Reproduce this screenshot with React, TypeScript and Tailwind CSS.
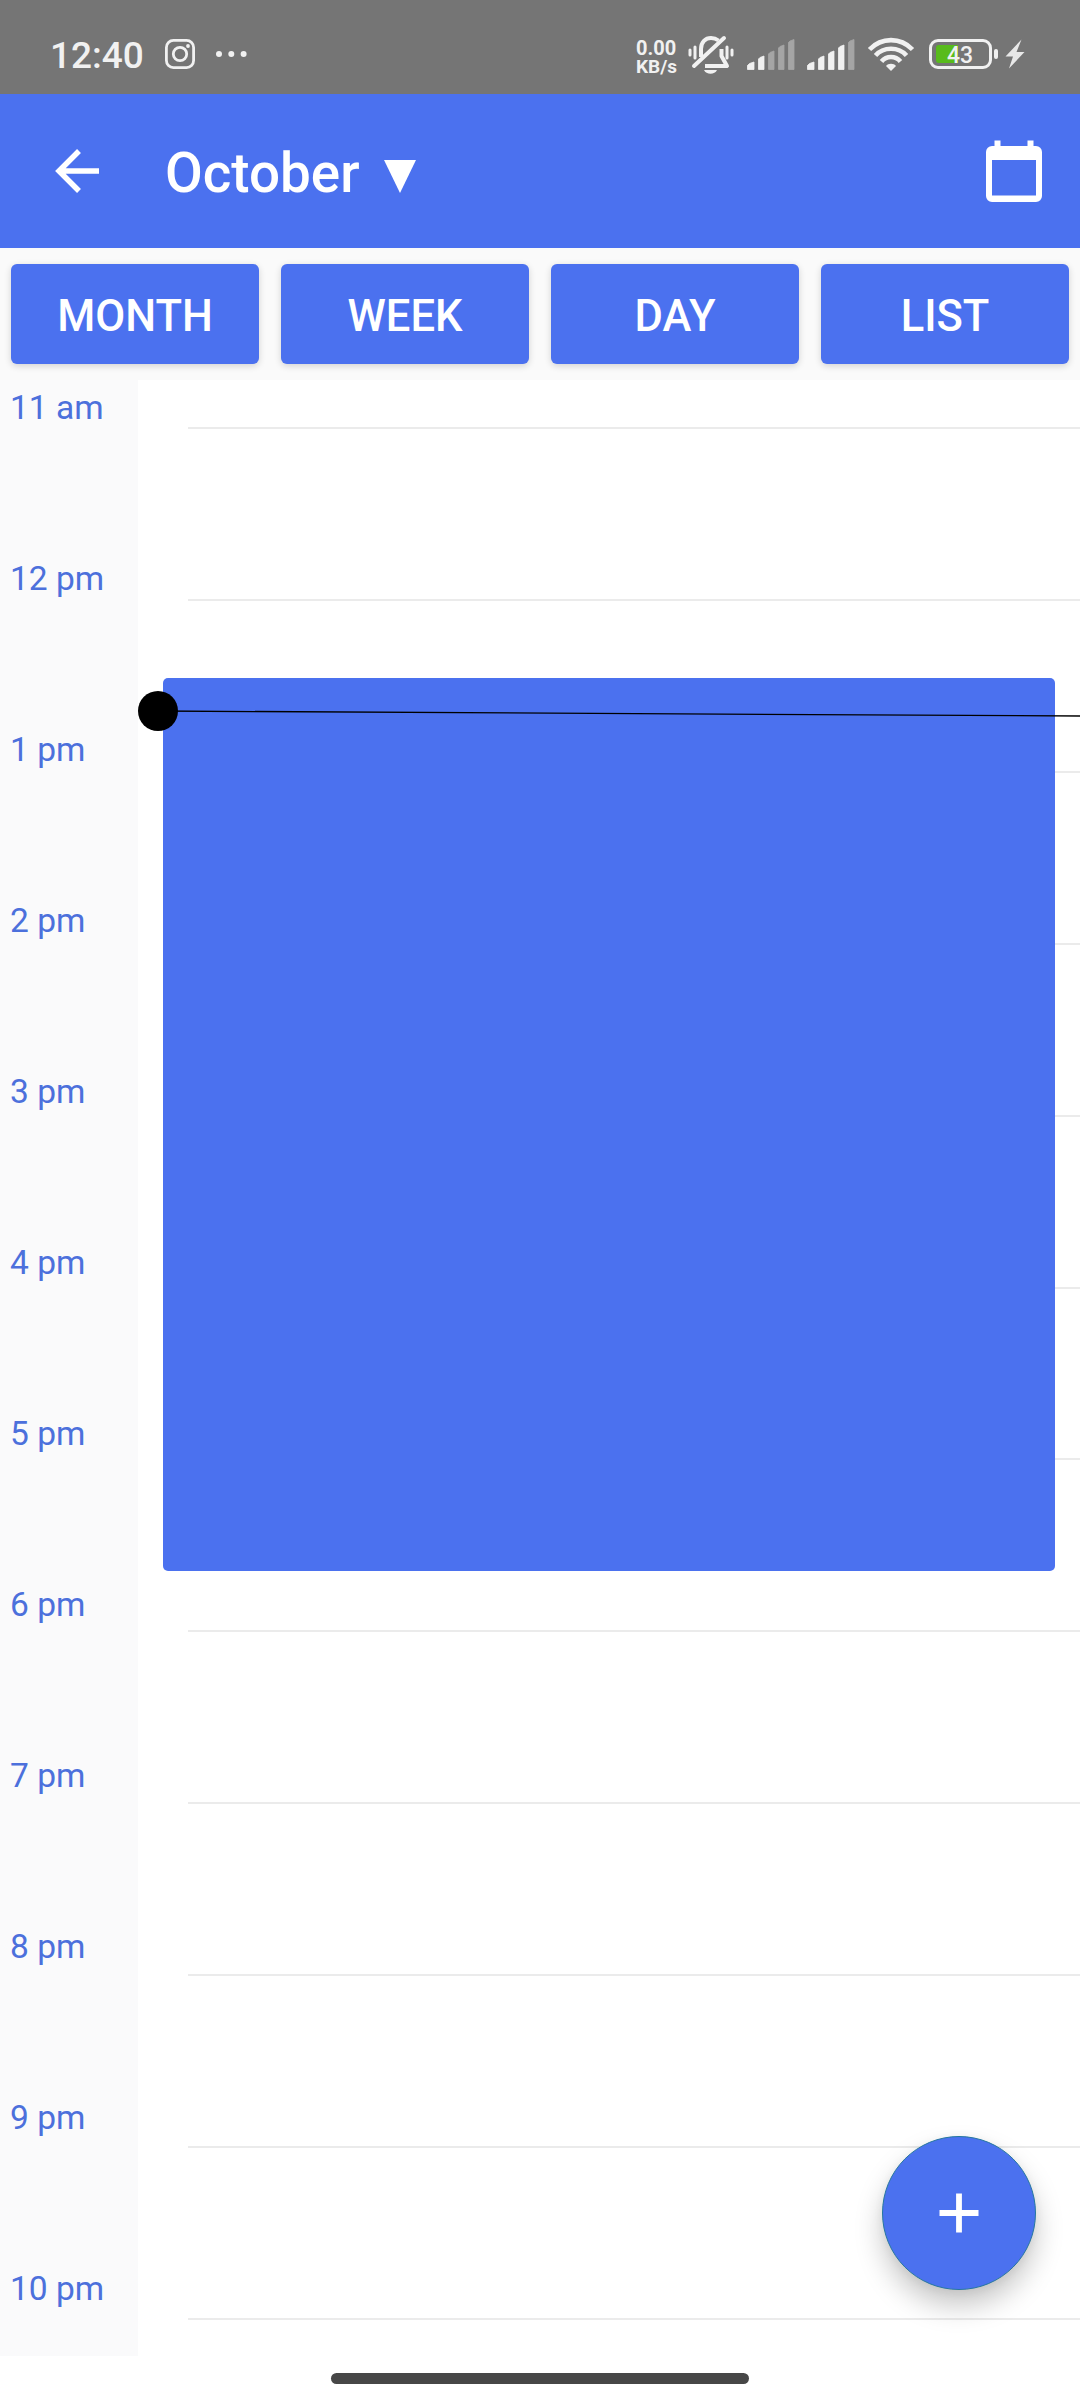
const HOURS = ['11 am', '12 pm', '1 pm', '2 pm', '3 pm', '4 pm', '5 pm', '6 pm', '7 pm', '8 pm', '9 pm', '10 pm'];
const TABS = ['MONTH', 'WEEK', 'DAY', 'LIST'];

function Signal({ level }: { level: number }) {
  const bars = [
    'M0.500 30.500V26.500L2.500 24.500L7 23V30.500Z',
    'M11.500 30.500V20L13 18.500L17 17V30.500Z',
    'M21.500 30.500V15L23 13.500L27 12V30.500Z',
    'M31.500 30.500V9L33 7.500L37 6V30.500Z',
    'M41.500 30.500V3.500L43 2L47 0.500V30.500Z',
  ];
  return (
    <svg className="h-8 w-12" viewBox="0 0 48 32">
      {bars.map((d, i) => (
        <path key={d} d={d} fill={i < level ? '#f1f1f1' : '#a5a5a5'} stroke={i < level ? '#f1f1f1' : '#a5a5a5'} strokeWidth="0.8" strokeLinejoin="round" />
      ))}
    </svg>
  );
}

function StatusBar() {
  return (
    <div className="flex h-[94px] shrink-0 items-start bg-[#757575] text-[#f1f1f1]">
      <div className="ml-[50px] mt-[34px] w-[115px] whitespace-nowrap text-[37px] leading-[43px] font-medium">12:40</div>
      <svg className="mt-[39px] h-[30px] w-[30px]" viewBox="0 0 30 30" fill="none" stroke="#f1f1f1">
        <rect x="1.400" y="1.400" width="27.200" height="27.200" rx="7" strokeWidth="2.800" />
        <circle cx="15" cy="15" r="6.700" strokeWidth="2.800" />
        <circle cx="23" cy="7" r="1.900" fill="#f1f1f1" stroke="none" />
      </svg>
      <svg className="ml-[20px] mt-[51px] h-[6px] w-[33px]" viewBox="0 0 33 6" fill="#f1f1f1">
        <circle cx="4" cy="3" r="3" />
        <circle cx="16.300" cy="3" r="3" />
        <circle cx="28.600" cy="3" r="3" />
      </svg>
      <div className="ml-auto mt-[39px] w-[52px] whitespace-nowrap text-[20px] leading-[18px] font-bold">
        <div>0.00</div>
        <div className="pt-px text-[19px]">KB/s</div>
      </div>
      <svg className="mt-[35px] h-[40px] w-[46px]" viewBox="0 0 46 40" fill="none" stroke="#f1f1f1">
        <path d="M2 15v5M7 12v11M39 12v11M44 15v5" strokeWidth="3" strokeLinecap="round" />
        <path d="M13 22V14C13 7 17.500 3 23 3C26 3 28.500 4 30.500 5.500" strokeWidth="4" />
        <path d="M33.500 14V21L39 31H17" strokeWidth="4" strokeLinejoin="round" />
        <path d="M6 31L36 3" strokeWidth="4" strokeLinecap="round" />
        <path d="M16 35H29C27 40 18 40 16 35Z" fill="#f1f1f1" stroke="none" />
      </svg>
      <div className="ml-[13px] mt-[39px]"><Signal level={2} /></div>
      <div className="ml-[12px] mt-[39px]"><Signal level={4} /></div>
      <svg className="ml-[12px] mt-[37px] h-[35px] w-[48px]" viewBox="0 0 48 35" fill="none" stroke="#f1f1f1" strokeWidth="4.600">
        <path d="M2.500 12.500C14.500 0 33.500 0 45.500 12.500" />
        <path d="M8.500 18.500C16.500 9.500 31.500 9.500 39.500 18.500" />
        <path d="M14.500 24.500C19.500 18.500 28.500 18.500 33.500 24.500" />
        <path d="M24 34L19 29C21 26 27 26 29 29Z" fill="#f1f1f1" stroke="none" />
      </svg>
      <div className="relative ml-[14px] mt-[39px] flex h-[30px] w-[63px] items-center rounded-[9px] border-[3px] border-[#f1f1f1]">
        <div className="ml-[4px] h-[18px] w-[22px] rounded-l-[3px] bg-[#58bb1c]" />
        <div className="absolute inset-0 pl-[15px] text-[23px] leading-[27px] font-medium">43</div>
      </div>
      <div className="ml-[2px] mt-[49px] h-[10px] w-[4px] rounded-[2px] bg-[#f1f1f1]" />
      <svg className="ml-[7px] mr-[55px] mt-[39px] h-[30px] w-[20px]" viewBox="0 0 20 30" fill="#e8e8e8">
        <path d="M16.500 0.500L0.500 17.500H8L4 29.500L19.500 13H11.500Z" />
      </svg>
    </div>
  );
}

function Header() {
  return (
    <div className="flex h-[154px] shrink-0 items-center bg-[#4b71ef] text-white">
      <svg className="ml-[55px] h-[44px] w-[44px]" viewBox="0 0 44 44" fill="none" stroke="white" strokeWidth="5.500">
        <path d="M44 22H4M24 2L4 22L24 42" />
      </svg>
      <div className="ml-[66px] flex items-center pt-[3px]">
        <span className="w-[194px] whitespace-nowrap text-[54.800px] leading-[64px] font-medium">October</span>
        <svg className="ml-[25px] mt-[7px] h-[33px] w-[32px]" viewBox="0 0 32 33" fill="white">
          <path d="M0 0H32L16 33Z" />
        </svg>
      </div>
      <svg className="ml-auto mr-[38px] h-[62px] w-[56px]" viewBox="0 0 56 62" fill="white">
        <path fillRule="evenodd" d="M8.500 0.500h6v5.500h27V0.500h6v5.500H50a6 6 0 0 1 6 6v44a6 6 0 0 1-6 6H6a6 6 0 0 1-6-6V12a6 6 0 0 1 6-6h2.500ZM6 20v35.500h44V20Z" />
      </svg>
    </div>
  );
}

export default function App() {
  return (
    <div className="relative flex h-[2400px] w-[1080px] flex-col overflow-hidden bg-white font-['Roboto',sans-serif]">
      <StatusBar />
      <Header />
      <div className="grid h-[132px] shrink-0 grid-cols-4 gap-[22px] bg-[#fafafa] px-[11px] py-4">
        {TABS.map((tab) => (
          <button key={tab} className="rounded-[6px] bg-[#4b71ef] pt-[6px] text-center text-[43.500px] leading-[52px] font-medium text-white shadow-[0_2px_7px_rgba(0,0,0,0.16)]">
            {tab}
          </button>
        ))}
      </div>
      <div className="flex h-[1976px] shrink-0">
        <div className="w-[138px] bg-[#fafafb] pt-2 text-[#4c70dc]">
          {HOURS.map((hour) => (
            <div key={hour} className="h-[171px] whitespace-nowrap pl-[10px] text-[33.500px] leading-[40px]">{hour}</div>
          ))}
        </div>
        <div className="relative flex-1">
          <div className="ml-[50px] pt-[47px]">
            {HOURS.map((hour) => (
              <div key={hour} className="h-[171.910px] border-t-2 border-[#ebebeb]" />
            ))}
          </div>
          <div className="absolute left-[25px] top-[298px] h-[893px] w-[892px] rounded-[5px] bg-[#4b71ef]" />
          <svg className="absolute left-0 top-[311px] h-[42px] w-[942px]" viewBox="0 0 942 42">
            <path d="M20 20L942 25" stroke="black" strokeWidth="1.300" />
            <circle cx="20" cy="20" r="20" />
          </svg>
        </div>
      </div>
      <div className="flex h-11 justify-center pt-[17px]">
        <div className="h-[11px] w-[418px] rounded-full bg-[#474747]" />
      </div>
      <button className="absolute left-[882px] top-[2136px] flex h-[154px] w-[154px] items-center justify-center rounded-full border border-[#2577a0] bg-[#4b71ef] shadow-[0_16px_28px_rgba(0,0,0,0.22),0_2px_10px_rgba(0,0,0,0.06)]">
        <svg className="h-[40px] w-[40px]" viewBox="0 0 40 40" stroke="white" strokeWidth="5.800">
          <path d="M0.500 20H39.500M20 0.500V39.500" />
        </svg>
      </button>
    </div>
  );
}
